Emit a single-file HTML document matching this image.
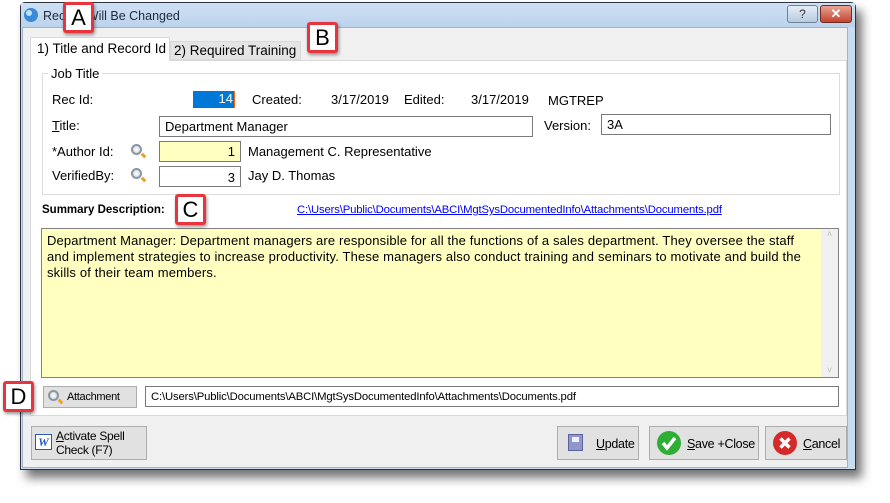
<!DOCTYPE html>
<html><head><meta charset="utf-8"><style>
*{box-sizing:border-box;margin:0;padding:0}
body{width:890px;height:503px;background:#fff;position:relative;overflow:hidden;font-family:"Liberation Sans",sans-serif;font-size:13px;color:#000}
.a{position:absolute}
.win{left:20px;top:2px;width:836px;height:468px;border:1px solid #2b3440;background:#c9dcf0;box-shadow:6px 8px 10px rgba(0,0,0,.55);border-radius:5px 5px 0 0}
.title{left:21px;top:3px;width:834px;height:24px;background:linear-gradient(#cfe0f3,#bcd3ec)}
.client{left:22px;top:27px;width:826px;height:441px;background:#f0f0f0;border:1px solid #9fb4cc}
.panel{left:30px;top:60px;width:817px;height:356px;background:#fff;border:1px solid #d9d9d9}
.tab1{left:30px;top:37px;width:140px;height:24px;background:#fff;border:1px solid #d9d9d9;border-bottom:none;padding:3px 0 0 6px;font-size:13.5px}
.tab2{left:170px;top:41px;width:131px;height:19px;background:#e5e5e5;border:1px solid #d9d9d9;padding:1px 0 0 3px;font-size:13.5px}
.grp{left:42px;top:73px;width:798px;height:122px;border:1px solid #dcdcdc}
.in{border:1px solid #7a7a7a;background:#fff;height:21px;padding:2px 5px}
.lbl{position:absolute;white-space:nowrap}
.box{position:absolute;width:31px;height:31px;background:#fff;border:3px solid #e8343c;border-radius:3px;font-size:22px;text-align:center;line-height:25px;box-shadow:1px 2px 3px rgba(0,0,0,.4)}
.btn{position:absolute;background:#e1e1e1;border:1px solid #adadad;font-size:12px;letter-spacing:-.3px}
u{text-decoration:underline}
.lens{position:absolute;width:11px;height:11px;border:2px solid #8a96a2;border-radius:50%;background:radial-gradient(#fff,#c8d2dc)}
.lens:after{content:"";position:absolute;left:8px;top:8px;width:5px;height:3px;background:#e8a32a;transform:rotate(45deg)}
</style></head><body>
<div class="a win"></div>
<div class="a title"></div>
<svg class="a" style="left:23px;top:7px" width="16" height="16"><circle cx="8" cy="8" r="7" fill="#3a8ad8"/><circle cx="6" cy="6" r="3" fill="#bfe2ff"/></svg>
<div class="lbl" style="left:43px;top:9px;font-size:12.5px;color:#1e2a3a">Record Will Be Changed</div>
<div class="a" style="left:787px;top:5px;width:31px;height:18px;border:1px solid #6d829b;border-radius:3px;background:linear-gradient(#e4edf7,#b9cbe0);text-align:center;font-size:12px;color:#333;line-height:16px">?</div>
<div class="a" style="left:820px;top:5px;width:32px;height:18px;border:1px solid #6b2a22;border-radius:3px;background:linear-gradient(#e8a493,#c5432d);text-align:center;font-size:13px;font-weight:bold;color:#fff;line-height:16px">✕</div>
<div class="a client"></div>
<div class="a panel"></div>
<div class="a tab2">2) Required Training</div>
<div class="a tab1">1) Title and Record Id</div>
<div class="a grp"></div>
<div class="lbl" style="left:48px;top:66px;background:#fff;padding:0 3px">Job Title</div>
<div class="lbl" style="left:52px;top:92px">Rec Id:</div>
<div class="a" style="left:193px;top:91px;width:42px;height:17px;background:#0078d7;color:#fff;text-align:right;padding-right:1px;border-right:1px solid #f60">14</div>
<div class="lbl" style="left:252px;top:92px">Created:</div>
<div class="lbl" style="left:331px;top:92px">3/17/2019</div>
<div class="lbl" style="left:404px;top:92px">Edited:</div>
<div class="lbl" style="left:471px;top:92px">3/17/2019</div>
<div class="lbl" style="left:548px;top:93px">MGTREP</div>
<div class="lbl" style="left:52px;top:118px"><u>T</u>itle:</div>
<div class="a in" style="left:159px;top:116px;width:374px">Department Manager</div>
<div class="lbl" style="left:544px;top:118px">Version:</div>
<div class="a in" style="left:601px;top:114px;width:230px">3A</div>
<div class="lbl" style="left:52px;top:144px">*Author Id:</div>
<div class="lens" style="left:131px;top:144px"></div>
<div class="a in" style="left:159px;top:141px;width:82px;background:#ffffc0;text-align:right">1</div>
<div class="lbl" style="left:248px;top:144px">Management C. Representative</div>
<div class="lbl" style="left:52px;top:168px">VerifiedBy:</div>
<div class="lens" style="left:131px;top:168px"></div>
<div class="a in" style="left:159px;top:166px;width:82px;text-align:right;padding-top:3px">3</div>
<div class="lbl" style="left:248px;top:168px">Jay D. Thomas</div>
<div class="lbl" style="left:42px;top:204px;font-size:11.5px;font-weight:bold">Summary Description:</div>
<div class="lbl" style="left:297px;top:204px;font-size:11.3px;color:#00f;text-decoration:underline;letter-spacing:-.15px">C:\Users\Public\Documents\ABCI\MgtSysDocumentedInfo\Attachments\Documents.pdf</div>
<div class="a" style="left:41px;top:228px;width:798px;height:150px;border:1px solid #828282;background:#ffffc0"></div>
<div class="a" style="left:821px;top:229px;width:17px;height:148px;background:#f0f0f0;color:#bbb;font-size:9px;text-align:center">˄<div style="position:absolute;bottom:2px;width:17px">˅</div></div>
<div class="lbl" style="left:47px;top:233px;line-height:16px;letter-spacing:.15px">Department Manager: Department managers are responsible for all the functions of a sales department. They oversee the staff<br>and implement strategies to increase productivity. These managers also conduct training and seminars to motivate and build the<br>skills of their team members.</div>
<div class="btn" style="left:43px;top:386px;width:94px;height:22px;padding:4px 0 0 23px;font-size:11px">Attachment</div>
<div class="lens" style="left:48px;top:390px"></div>
<div class="a in" style="left:145px;top:386px;width:694px;font-size:11.3px;letter-spacing:-.15px;padding-top:4px">C:\Users\Public\Documents\ABCI\MgtSysDocumentedInfo\Attachments\Documents.pdf</div>
<div class="btn" style="left:31px;top:426px;width:116px;height:34px;padding:2px 0 0 24px;line-height:14px"><u>A</u>ctivate Spell<br>Check (F7)</div>
<div class="a" style="left:35px;top:434px;width:17px;height:16px;background:#fff;border:1px solid #2a5ab8;color:#2a5ab8;font:bold italic 12px 'Liberation Serif',serif;text-align:center">W</div>
<div class="btn" style="left:557px;top:426px;width:82px;height:34px;padding:10px 0 0 38px;font-size:12.5px"><u>U</u>pdate</div>
<div class="a" style="left:568px;top:434px;width:15px;height:17px;background:#8f96c8;border:1px solid #5a62a0"><div style="margin:2px 3px;height:5px;background:#eef"></div></div>
<div class="btn" style="left:649px;top:426px;width:110px;height:34px;padding:10px 0 0 37px;font-size:12.5px"><u>S</u>ave +Close</div>
<svg class="a" style="left:656px;top:430px" width="26" height="26"><circle cx="13" cy="13" r="12" fill="#2fae35"/><path d="M7 13l4 5 8-10" stroke="#fff" stroke-width="3.5" fill="none"/></svg>
<div class="btn" style="left:765px;top:426px;width:82px;height:34px;padding:10px 0 0 37px;font-size:12.5px"><u>C</u>ancel</div>
<svg class="a" style="left:772px;top:430px" width="26" height="26"><circle cx="13" cy="13" r="12" fill="#d42a2a"/><path d="M8.5 8.5l9 9M17.5 8.5l-9 9" stroke="#fff" stroke-width="3.5"/></svg>
<div class="box" style="left:63px;top:2px">A</div>
<div class="box" style="left:307px;top:22px">B</div>
<div class="box" style="left:175px;top:194px">C</div>
<div class="box" style="left:3px;top:381px">D</div>
</body></html>
